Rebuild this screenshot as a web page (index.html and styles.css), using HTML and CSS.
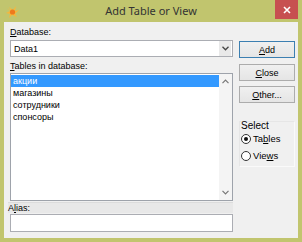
FILE: index.html
```html
<!DOCTYPE html>
<html lang="en">
<head>
  <meta charset="UTF-8" />
  <title>Add Table or View</title>
  <link rel="stylesheet" href="styles.css">
</head>
<body>

  <div class="window">
    <div class="titlebar">
      <svg class="app-icon" width="13" height="12" viewBox="0 0 13 12">
        <path d="M1 2 L5 5 L3 1 L7 4 L10 0 L9 5 L13 4 L9 8 L11 11 L6 9 L3 12 L4 8 L0 7 L4 5 Z" fill="#f6b73c"/>
        <circle cx="6.5" cy="6" r="2.6" fill="#ee7a1e"/>
      </svg>
      <span class="title">Add Table or View</span>
      <div class="close-btn">
        <svg width="8" height="8" viewBox="0 0 8 8">
          <path d="M1 1 L7 7 M7 1 L1 7" stroke="#fff" stroke-width="1.6"/>
        </svg>
      </div>
    </div>

    <div class="client">
      <div class="left-col">
        <div class="label"><u>D</u>atabase:</div>
        <div class="combo">
          <span class="combo-text">Data1</span>
          <span class="combo-drop">
            <svg width="7" height="5" viewBox="0 0 7 5"><path d="M0.5 0.8 L3.5 3.8 L6.5 0.8" fill="none" stroke="#444" stroke-width="1.3"/></svg>
          </span>
        </div>

        <div class="label gap-top"><u>T</u>ables in database:</div>
        <div class="listbox">
          <ul class="items">
            <li class="selected">акции</li>
            <li>магазины</li>
            <li>сотрудники</li>
            <li>спонсоры</li>
          </ul>
          <div class="vscroll">
            <svg width="7" height="5" viewBox="0 0 7 5"><path d="M0.5 4.2 L3.5 1.2 L6.5 4.2" fill="none" stroke="#777" stroke-width="1.2"/></svg>
            <svg width="7" height="5" viewBox="0 0 7 5"><path d="M0.5 0.8 L3.5 3.8 L6.5 0.8" fill="none" stroke="#777" stroke-width="1.2"/></svg>
          </div>
        </div>

        <div class="label alias-band">A<u>l</u>ias:</div>
        <div class="textbox"></div>
      </div>

      <div class="right-col">
        <button class="btn default"><u>A</u>dd</button>
        <button class="btn"><u>C</u>lose</button>
        <button class="btn"><u>O</u>ther...</button>

        <div class="group">
          <div class="group-title">Select</div>
          <label class="radio"><span class="dot checked"></span>Ta<u>b</u>les</label>
          <label class="radio"><span class="dot"></span>Vie<u>w</u>s</label>
        </div>
      </div>
    </div>
  </div>

</body>
</html>
```

FILE: styles.css
```css
body {
  margin: 0;
  width: 302px;
  height: 242px;
  overflow: hidden;
  font-family: "Liberation Sans Narrow", "Liberation Sans", sans-serif;
  font-stretch: condensed;
  font-size: 9px;
  color: #000;
}

.window {
  width: 302px;
  height: 242px;
  box-sizing: border-box;
  background: #c1c56e;
  padding: 0 4px 4px 4px;
  display: flex;
  flex-direction: column;
}

.titlebar {
  height: 22px;
  flex: none;
  display: flex;
  align-items: center;
  justify-content: center;
  position: relative;
}

.app-icon {
  position: absolute;
  left: 2px;
  top: 6px;
}

.title {
  font-family: "Noto Sans", sans-serif;
  font-stretch: normal;
  font-size: 11px;
  color: #333;
  margin-top: -1px;
}

.close-btn {
  position: absolute;
  right: 0;
  top: 0;
  width: 23px;
  height: 19px;
  background: #c75050;
  display: flex;
  align-items: center;
  justify-content: center;
}

.client {
  flex: 1;
  background: #f0f0f0;
  display: flex;
  gap: 6px;
  padding: 5px 3px 0 6px;
}

.left-col {
  width: 223px;
  display: flex;
  flex-direction: column;
}

.label {
  height: 11px;
  line-height: 11px;
  white-space: nowrap;
}

.gap-top {
  margin-top: 4px;
}

.combo {
  margin-top: 2px;
  height: 17px;
  box-sizing: border-box;
  border: 1px solid #abadb3;
  background: #fff;
  display: flex;
  align-items: center;
}

.combo-text {
  flex: 1;
  padding-left: 3px;
}

.combo-drop {
  width: 12px;
  height: 15px;
  margin-right: 1px;
  background: #e9e9e9;
  display: flex;
  align-items: center;
  justify-content: center;
}

.listbox {
  margin-top: 1px;
  height: 128px;
  box-sizing: border-box;
  border: 1px solid #9ea3ab;
  background: #fff;
  display: flex;
}

.items {
  flex: 1;
  list-style: none;
  margin: 0;
  padding: 1px 0 0 0;
}

.items li {
  height: 12px;
  line-height: 12px;
  padding-left: 2px;
}

.items li.selected {
  background: #3399ff;
  color: #fff;
}

.vscroll {
  width: 13px;
  background: #f4f4f4;
  display: flex;
  flex-direction: column;
  justify-content: space-between;
  align-items: center;
  padding: 5px 0 5px 0;
}

.alias-band {
  margin-top: 1px;
  margin-left: -2px;
  background: #e8e8e8;
  border-top: 1px solid #dcdcdc;
  box-sizing: border-box;
}

.textbox {
  margin-top: 1px;
  height: 18px;
  box-sizing: border-box;
  border: 1px solid #abadb3;
  background: #fff;
}

.right-col {
  width: 56px;
  display: flex;
  flex-direction: column;
  padding-top: 14px;
}

.btn {
  height: 17px;
  margin: 0 0 5px 0;
  padding: 0;
  font: inherit;
  color: #000;
  border: 1px solid #acacac;
  background: linear-gradient(#f0f0f0, #e5e5e5);
  border-radius: 0;
}

.btn.default {
  border-color: #3c7fb1;
  margin-bottom: 6px;
}

.group {
  margin-top: 13px;
  height: 46px;
  box-sizing: border-box;
  border: 1px solid #e6e6e6;
  border-right-color: #fafafa;
  border-bottom-color: #fafafa;
  padding: 0 0 0 1px;
}

.group-title {
  height: 9px;
  line-height: 9px;
  font-size: 10px;
  margin-top: -1px;
}

.radio {
  display: flex;
  align-items: center;
  height: 13px;
  margin-top: 2px;
  font-size: 9.5px;
}

.radio + .radio {
  margin-top: 4px;
}

.dot {
  width: 10px;
  height: 10px;
  box-sizing: border-box;
  border: 1px solid #333;
  border-radius: 50%;
  background: #fff;
  margin-right: 2px;
  display: flex;
  align-items: center;
  justify-content: center;
}

.dot.checked::after {
  content: "";
  width: 4px;
  height: 4px;
  border-radius: 50%;
  background: #111;
}
```
